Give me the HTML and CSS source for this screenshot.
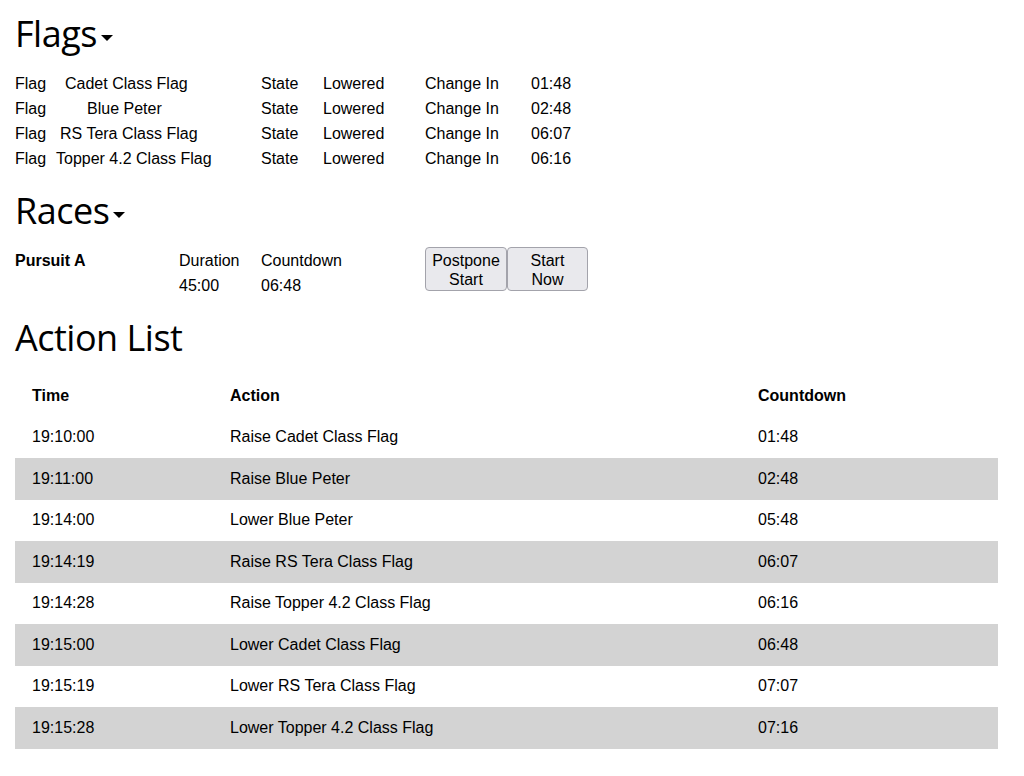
FILE: index.html
```html
<!DOCTYPE html>
<html lang="en">
<head>
<meta charset="utf-8">
<title>Race Control</title>
<link rel="stylesheet" href="styles.css">
</head>
<body>
<section class="section">
  <h1 class="heading heading-flags">Flags<span class="caret"></span></h1>
  <div class="flag-list">
    <div class="flag-row">
      <span>Flag</span><span class="flag-name pad-cadet">Cadet Class Flag</span><span>State</span><span>Lowered</span><span>Change In</span><span>01:48</span>
    </div>
    <div class="flag-row">
      <span>Flag</span><span class="flag-name pad-blue">Blue Peter</span><span>State</span><span>Lowered</span><span>Change In</span><span>02:48</span>
    </div>
    <div class="flag-row">
      <span>Flag</span><span class="flag-name pad-rs">RS Tera Class Flag</span><span>State</span><span>Lowered</span><span>Change In</span><span>06:07</span>
    </div>
    <div class="flag-row">
      <span>Flag</span><span class="flag-name pad-topper">Topper 4.2 Class Flag</span><span>State</span><span>Lowered</span><span>Change In</span><span>06:16</span>
    </div>
  </div>
</section>

<section class="section">
  <h1 class="heading heading-races">Races<span class="caret"></span></h1>
  <div class="race-row">
    <div class="race-name">Pursuit A</div>
    <div class="race-stat"><div>Duration</div><div>45:00</div></div>
    <div class="race-stat"><div>Countdown</div><div>06:48</div></div>
    <div class="race-actions"><button class="btn">Postpone<br>Start</button><button class="btn">Start<br>Now</button></div>
  </div>
</section>

<section class="section">
  <h1 class="heading heading-actions">Action List</h1>
  <table class="actions">
    <thead>
      <tr><th class="col-time">Time</th><th class="col-action">Action</th><th>Countdown</th></tr>
    </thead>
    <tbody>
      <tr><td>19:10:00</td><td>Raise Cadet Class Flag</td><td>01:48</td></tr>
      <tr><td>19:11:00</td><td>Raise Blue Peter</td><td>02:48</td></tr>
      <tr><td>19:14:00</td><td>Lower Blue Peter</td><td>05:48</td></tr>
      <tr><td>19:14:19</td><td>Raise RS Tera Class Flag</td><td>06:07</td></tr>
      <tr><td>19:14:28</td><td>Raise Topper 4.2 Class Flag</td><td>06:16</td></tr>
      <tr><td>19:15:00</td><td>Lower Cadet Class Flag</td><td>06:48</td></tr>
      <tr><td>19:15:19</td><td>Lower RS Tera Class Flag</td><td>07:07</td></tr>
      <tr><td>19:15:28</td><td>Lower Topper 4.2 Class Flag</td><td>07:16</td></tr>
    </tbody>
  </table>
</section>
</body>
</html>
```

FILE: styles.css
```css
* { box-sizing: border-box; }

html, body {
  margin: 0;
  padding: 0;
  background: #ffffff;
}

body {
  padding: 0 15px;
  font-family: "Liberation Sans", Arial, sans-serif;
  font-size: 16px;
  color: #000;
}

.heading {
  font-family: "Open Sans", "Noto Sans", sans-serif;
  font-weight: 400;
  font-size: 36px;
  letter-spacing: -0.5px;
  line-height: 44px;
  margin: 0;
  display: flex;
  align-items: center;
}

.heading-flags { padding-top: 12px; margin-bottom: 15px; }
.heading-races { padding-top: 18px; margin-bottom: 15px; }
.heading-actions { padding-top: 18px; margin-bottom: 15px; }

.caret {
  display: inline-block;
  width: 0;
  height: 0;
  margin-left: 4px;
  margin-top: 7px;
  border-left: 6px solid transparent;
  border-right: 6px solid transparent;
  border-top: 6px solid #000;
}

.flag-row {
  display: grid;
  grid-template-columns: 41px 205px 62px 102px 106px auto;
  line-height: 25px;
  height: 25px;
  white-space: nowrap;
}

.pad-cadet { padding-left: 9px; }
.pad-blue { padding-left: 31px; }
.pad-rs { padding-left: 4px; }
.pad-topper { padding-left: 0; }

.race-row {
  display: grid;
  grid-template-columns: 164px 82px 164px auto;
  align-items: start;
}

.race-name {
  font-weight: 700;
  line-height: 25px;
}

.race-stat div {
  line-height: 25px;
}

.race-actions {
  display: flex;
}

.btn {
  font-family: "Liberation Sans", Arial, sans-serif;
  font-size: 16px;
  line-height: 18.5px;
  color: #000;
  background: #e9e9ed;
  border: 1px solid #a3a3ab;
  border-radius: 4px;
  padding: 4px 5px 1px;
  width: 82px;
  height: 44px;
  margin: -1px 0 0 0;
  text-align: center;
}

.btn + .btn { width: 81px; }

.actions {
  width: 983px;
  border-collapse: collapse;
  table-layout: fixed;
}

.actions th,
.actions td {
  text-align: left;
  padding: 0 17px;
  height: 41.5px;
  line-height: 18px;
  vertical-align: middle;
}

.actions th { font-weight: 700; }

.col-time { width: 198px; }
.col-action { width: 528px; }

.actions tbody tr:nth-child(even) {
  background: #d3d3d3;
}
```
